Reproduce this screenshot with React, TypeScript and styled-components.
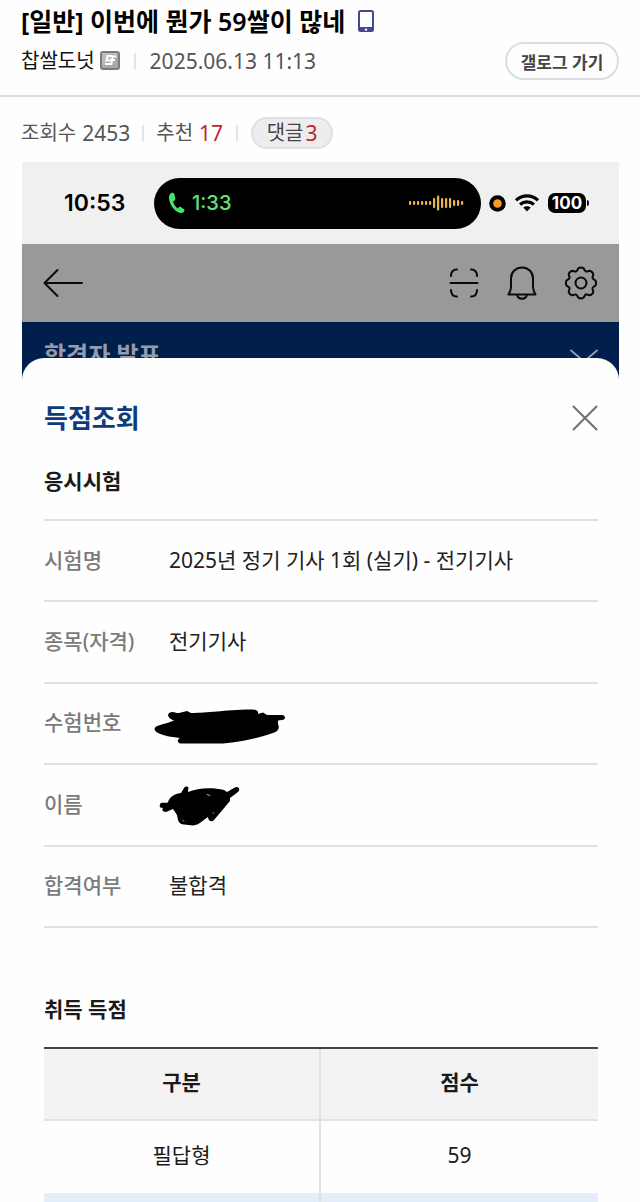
import React from "react";
import styled, { createGlobalStyle } from "styled-components";

const GlobalStyle = createGlobalStyle`
  * { box-sizing: border-box; }
  body {
    margin: 0;
    background: #fefefe;
    color: #222;
    font-family: "Noto Sans", "Noto Sans CJK KR", sans-serif;
  }
  h1, h2, h3, p { margin: 0; }
  button { font: inherit; color: inherit; background: none; border: 0; padding: 0; cursor: pointer; }
  svg { display: block; flex: none; }
`;

const PostHeader = styled.header`
  padding: 4px 21px 15px;
  border-bottom: 2px solid #dfdfe1;
`;

const TitleRow = styled.div`
  display: flex;
  align-items: center;
  gap: 12px;
`;

const PostTitle = styled.h1`
  color: #000;
  font-size: 25px;
  line-height: 34px;
  font-weight: 700;
`;

const TitleNumber = styled.span`
  font-weight: 600;
`;

const MetaRow = styled.div`
  display: flex;
  align-items: center;
  justify-content: space-between;
  padding-top: 4px;
`;

const Inline = styled.div`
  display: flex;
  align-items: center;
  color: #555;
  line-height: 28px;
`;

const Author = styled.span`
  color: #111;
  font-size: 20px;
  margin-right: 5px;
`;

const Divider = styled.span<{ $gap: number }>`
  width: 2px;
  height: 16px;
  margin: 0 ${(p) => p.$gap}px;
  background: #e4e4e6;
`;

const DateText = styled.time`
  font-size: 21px;
`;

const GallogLink = styled.a`
  display: flex;
  align-items: center;
  justify-content: center;
  width: 114px;
  height: 38px;
  border: 2px solid #dcdde0;
  border-radius: 19px;
  color: #444;
  font-size: 17px;
  font-weight: 700;
  text-decoration: none;
`;

const Stats = styled(Inline)`
  padding: 20px 21px 13px;
  font-size: 20px;
`;

const Num = styled.span<{ $red?: boolean }>`
  margin-left: 6px;
  font-size: 21px;
  color: ${(p) => (p.$red ? "#c0272d" : "inherit")};
`;

const CommentPill = styled.a`
  display: flex;
  align-items: center;
  justify-content: center;
  gap: 2px;
  width: 82px;
  height: 32px;
  border: 2px solid #dfe0e3;
  border-radius: 16px;
  background: #ededef;
  color: #444;
  text-decoration: none;
  ${Num} { margin-left: 0; }
`;

const Phone = styled.main`
  margin: 0 21px 0 22px;
`;

const StatusBar = styled.div`
  display: flex;
  align-items: center;
  height: 82px;
  padding: 0 30px 0 42px;
  background: #f0f0f0;
  color: #000;
  font-family: Inter, sans-serif;
`;

const Clock = styled.span`
  width: 90px;
  font-size: 23px;
  font-weight: 600;
`;

const Island = styled.div`
  display: flex;
  flex: 1;
  align-items: center;
  gap: 7px;
  height: 51px;
  margin-right: 8px;
  padding: 0 17px 0 14px;
  border-radius: 26px;
  background: #000;
  color: #5fe27c;
  font-size: 20px;
  font-weight: 500;
  svg:last-child { margin-left: auto; }
`;

const StatusIcons = styled.div`
  display: flex;
  align-items: center;
  gap: 9px;
`;

const Battery = styled.span`
  display: flex;
  align-items: center;
  &::after {
    content: "";
    width: 2px;
    height: 6px;
    margin-left: 1px;
    border-radius: 0 2px 2px 0;
    background: #111;
  }
`;

const BatteryLevel = styled.span`
  width: 38px;
  border-radius: 7px;
  background: #000;
  color: #fff;
  font-size: 17px;
  font-weight: 700;
  line-height: 20px;
  text-align: center;
`;

const AppBar = styled.nav`
  display: flex;
  align-items: center;
  justify-content: space-between;
  height: 78px;
  padding: 0 22px 0 21px;
  background: #999;
`;

const Tools = styled.div`
  display: flex;
  align-items: center;
  gap: 28px;
`;

const Banner = styled.div`
  display: flex;
  justify-content: space-between;
  height: 58px;
  padding: 16px 20px 0 22px;
  background: #001f4d;
  color: #929cad;
`;

const BannerTitle = styled.h2`
  font-size: 24px;
  line-height: 34px;
  font-weight: 700;
`;

const BannerToggle = styled.button`
  align-self: flex-start;
  padding-top: 10px;
`;

const Sheet = styled.section`
  position: relative;
  margin-top: -22px;
  padding: 42px 21px 0 22px;
  border-radius: 22px 22px 0 0;
  background: #fefefe;
`;

const SheetHead = styled.div`
  display: flex;
  align-items: center;
  justify-content: space-between;
  margin-bottom: 30px;
`;

const SheetTitle = styled.h2`
  color: #0d3b7c;
  font-size: 26px;
  line-height: 36px;
  font-weight: 700;
`;

const SectionTitle = styled.h3`
  margin-bottom: 23px;
  color: #1a1a1a;
  font-size: 21px;
  line-height: 30px;
  font-weight: 700;
`;

const InfoTable = styled.table`
  width: 100%;
  height: 409px;
  margin-bottom: 66px;
  border-collapse: collapse;
  border-top: 2px solid #e0e0e0;
  font-size: 21px;
  line-height: 30px;
  tr { height: 81px; border-bottom: 2px solid #e0e0e0; }
  th, td { padding: 0 0 2px; text-align: left; }
  th { width: 125px; color: #7b7b7b; font-weight: 500; }
  td { color: #222; }
`;

const Scribble = styled.svg`
  margin-left: -16px;
`;

const ScoreTable = styled.table`
  width: 100%;
  table-layout: fixed;
  border-collapse: separate;
  border-spacing: 0;
  border-top: 2px solid #444;
  color: #1a1a1a;
  font-size: 21px;
  line-height: 30px;
  text-align: center;
  th, td { height: 72px; padding: 0 0 4px; }
  th { background: #f3f3f3; border-bottom: 2px solid #e2e2e2; font-weight: 700; }
  th:first-child, td:first-child { border-right: 2px solid #e2e2e2; }
  tfoot td { height: 10px; padding: 0; background: #e4eefb; }
`;

const WAVE = [4, 4, 4, 4, 4, 4, 10, 15, 10, 10, 10, 6, 6, 4].map((h, i) => ({ h, x: 1 + i * 4 }));

const DeviceIcon = () => (
  <svg width="18" height="24" viewBox="0 0 18 24">
    <rect x="1" y="1" width="16" height="22" rx="2.5" fill="#44498f" />
    <rect x="3" y="3" width="12" height="15" fill="#fff" />
    <circle cx="9" cy="20.6" r="1.2" fill="#fff" />
  </svg>
);

const BadgeIcon = () => (
  <svg width="20" height="21" viewBox="0 0 20 21">
    <rect x="1" y="1" width="18" height="17" rx="2" fill="#a9a9a9" stroke="#7c7c7c" strokeWidth="2" />
    <path d="M2 2h16L2 15z" fill="#bcbcbc" />
    <path d="M12.500 5H7.500L6.500 9.500H11.500L13 5L11.300 13H5M13 5.500h3.500M12 9h3" fill="none" stroke="#fff" strokeWidth="2" />
  </svg>
);

const WifiIcon = () => (
  <svg width="24" height="18" viewBox="0 0 24 18" fill="none" stroke="#000" strokeWidth="3.2">
    <path d="M1 6.3C7.2.4 16.8.4 23 6.3" />
    <path d="M5 10.5c4-3.6 10-3.6 14 0" />
    <path d="M8.3 13.6c2.2-1.9 5.2-1.9 7.4 0L12 17.5z" fill="#000" stroke="none" />
  </svg>
);

const CallIcon = () => (
  <svg width="17" height="22" viewBox="0 0 17 22" fill="#4be06c">
    <path d="M3.4 1C1.7 1.8.8 3.7 1 6.2c.5 6.4 5.2 12.7 10.4 14.6 2.3.8 4.4-.1 5-1.8.3-.8 0-1.5-.7-2l-3-1.9c-.8-.5-1.6-.3-2.2.4l-.8.9C7.3 14.9 5.5 12 5.2 9.2l1.3-.7c.7-.4 1-1.1.8-1.9L6.4 2.200C6.100 1 4.700.4 3.400 1z" />
  </svg>
);

const rows: { label: string; value: React.ReactNode }[] = [
  { label: "시험명", value: "2025년 정기 기사 1회 (실기) - 전기기사" },
  { label: "종목(자격)", value: "전기기사" },
  {
    label: "수험번호",
    value: (
      <Scribble width="134" height="50" viewBox="0 -12 134 50" aria-hidden="true">
        <path d="M17 3.500C20 2 22 4 26 4L34 2 38 4C55 4 70 1 98 .5 103 0 106 2 105 5L110 3.500 114 6 129 6C133 6.500 133 11 129 11L125 11.500 125 15C127 19 125 23 120 24 105 29 90 33 70 34.500H28C24 34.500 24 30 27 29L16 27.500C10 26 2 24 1.500 20 2 16 10 16 21 11.500 14 9 14 5 17 3.500Z" />
      </Scribble>
    ),
  },
  {
    label: "이름",
    value: (
      <Scribble width="90" height="48" viewBox="-4 -6 90 48" aria-hidden="true">
        <path d="M3 19C3 16 6 17 11 16.500 12 12 16 8 24 7L27 2C29-1 33 1 31 4L31 6C40 2 55 1 67 4L70 6 77 2C81-1 84 3 81 6L73 12 73 15 57 34C54 37 51 34 51 31 46 34 42 39 36 39.500L27 38.500C21 38 21 34 20 29L16 23 9 26C5 26 5 23 6 22 3 22 2 21 3 19Z" />
        <path d="M50 8.500l3 1M56 26.500l1 1M26 34.500l1 .5" stroke="#aaa" fill="none" strokeLinecap="round" />
      </Scribble>
    ),
  },
  { label: "합격여부", value: "불합격" },
];

export default function App() {
  return (
    <>
      <GlobalStyle />
      <PostHeader>
        <TitleRow>
          <PostTitle>
            [일반] 이번에 뭔가 <TitleNumber>59</TitleNumber>쌀이 많네
          </PostTitle>
          <DeviceIcon />
        </TitleRow>
        <MetaRow>
          <Inline>
            <Author>찹쌀도넛</Author>
            <BadgeIcon />
            <Divider $gap={14} />
            <DateText dateTime="2025-06-13T11:13">2025.06.13 11:13</DateText>
          </Inline>
          <GallogLink href="#gallog">갤로그 가기</GallogLink>
        </MetaRow>
      </PostHeader>
      <Stats>
        조회수<Num>2453</Num>
        <Divider $gap={12} />
        추천<Num $red>17</Num>
        <Divider $gap={13} />
        <CommentPill href="#comments">
          댓글<Num $red>3</Num>
        </CommentPill>
      </Stats>
      <Phone>
        <StatusBar>
          <Clock>10:53</Clock>
          <Island>
            <CallIcon />
            <span>1:33</span>
            <svg width="56" height="18" viewBox="0 0 56 18" fill="#eab54a">
              {WAVE.map((b) => (
                <rect key={b.x} x={b.x} y={9 - b.h / 2} width="2.2" height={b.h} rx="1" />
              ))}
            </svg>
          </Island>
          <StatusIcons>
            <svg width="17" height="17" viewBox="0 0 17 17">
              <circle cx="8.5" cy="8.5" r="8.3" />
              <circle cx="8.5" cy="8.5" r="4.3" fill="#f39b22" />
            </svg>
            <WifiIcon />
            <Battery>
              <BatteryLevel>100</BatteryLevel>
            </Battery>
          </StatusIcons>
        </StatusBar>
        <AppBar>
          <button aria-label="뒤로">
            <svg width="40" height="30" viewBox="0 0 40 30" fill="none" stroke="#0a0a0a" strokeWidth="2" strokeLinecap="round" strokeLinejoin="round">
              <path d="M39 15H1.500M14.500 2 1.500 15l13 13" />
            </svg>
          </button>
          <Tools>
            <button aria-label="스캔">
              <svg width="30" height="30" viewBox="0 0 30 30" fill="none" stroke="#0a0a0a" strokeWidth="2" strokeLinecap="round">
                <path d="M2 8c0-4 2-6.500 6-6.500M22 1.500c4 0 6 2.500 6 6.500M2 22c0 4 2 6.500 6 6.500M22 28.500c4 0 6-2.500 6-6.500M1.500 15h27" />
              </svg>
            </button>
            <button aria-label="알림">
              <svg width="30" height="34" viewBox="0 0 30 34" fill="none" stroke="#0a0a0a" strokeWidth="2" strokeLinecap="round" strokeLinejoin="round">
                <path d="M4 21V12.500C4 6 9 1.500 15 1.500S26 6 26 12.500V21c0 3 1 5 2.500 7.500H1.500C3 26 4 24 4 21zM10 28.500c1 5.500 9 5.500 10 0" />
              </svg>
            </button>
            <button aria-label="설정">
              <svg width="32" height="34" viewBox="0 0 32 34" fill="none" stroke="#0a0a0a" strokeWidth="2" strokeLinejoin="round">
                <path d="M12.300 4.200c1-3.600 6.400-3.600 7.400 0 .5 1.200 1.700 1.700 2.900 1.200 3.300-1.800 6.900 1.800 5.100 5.100-.5 1.200 0 2.400 1.200 2.900 3 1.200 3 6 0 7.200-1.200.5-1.700 1.700-1.200 2.900 1.800 3.300-1.800 6.900-5.100 5.100-1.200-.5-2.400 0-2.900 1.200-1 3.600-6.400 3.600-7.400 0-.5-1.200-1.700-1.700-2.900-1.200-3.300 1.800-6.900-1.800-5.100-5.100.5-1.200 0-2.400-1.200-2.900-3-1.200-3-6 0-7.200 1.200-.5 1.700-1.700 1.200-2.900-1.800-3.300 1.800-6.900 5.100-5.100 1.200.5 2.400 0 2.900-1.200z" />
                <circle cx="16" cy="17" r="5.5" />
              </svg>
            </button>
          </Tools>
        </AppBar>
        <Banner>
          <BannerTitle>합격자 발표</BannerTitle>
          <BannerToggle aria-label="펼치기">
            <svg width="30" height="16" viewBox="0 0 30 16" fill="none" stroke="#929cad" strokeWidth="2">
              <path d="M1.500 2 15 13.500 28.500 2" />
            </svg>
          </BannerToggle>
        </Banner>
        <Sheet>
          <SheetHead>
            <SheetTitle>득점조회</SheetTitle>
            <button aria-label="닫기">
              <svg width="26" height="26" viewBox="0 0 26 26" stroke="#707070" strokeWidth="2" strokeLinecap="round">
                <path d="M1.500 1.500l23 23M24.500 1.500l-23 23" />
              </svg>
            </button>
          </SheetHead>
          <SectionTitle>응시시험</SectionTitle>
          <InfoTable>
            <tbody>
              {rows.map((r) => (
                <tr key={r.label}>
                  <th scope="row">{r.label}</th>
                  <td>{r.value}</td>
                </tr>
              ))}
            </tbody>
          </InfoTable>
          <SectionTitle>취득 득점</SectionTitle>
          <ScoreTable>
            <thead>
              <tr>
                <th scope="col">구분</th>
                <th scope="col">점수</th>
              </tr>
            </thead>
            <tbody>
              <tr>
                <td>필답형</td>
                <td>59</td>
              </tr>
            </tbody>
            <tfoot>
              <tr>
                <td />
                <td />
              </tr>
            </tfoot>
          </ScoreTable>
        </Sheet>
      </Phone>
    </>
  );
}
